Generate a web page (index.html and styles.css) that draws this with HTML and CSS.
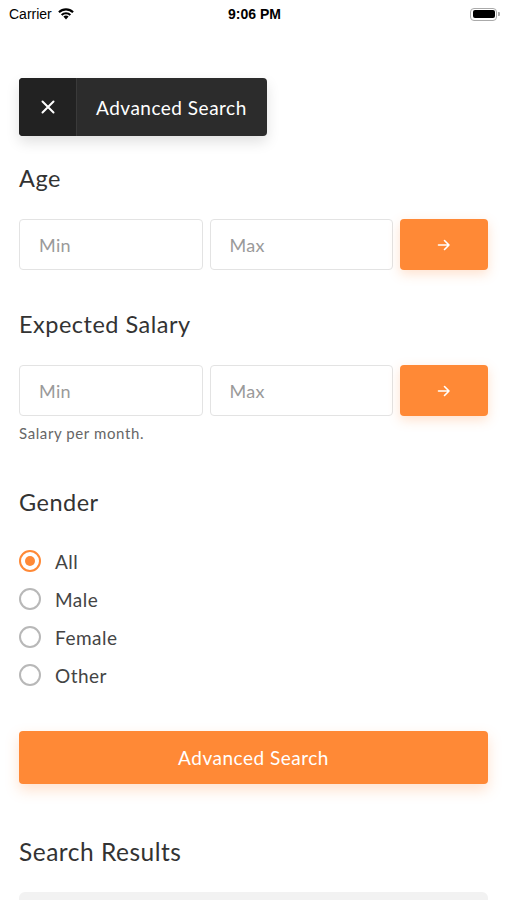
FILE: index.html
```html
<!DOCTYPE html>
<html lang="en">
<head>
<meta charset="utf-8">
<link rel="stylesheet" href="styles.css">
</head>
<body>
<div class="status">
  <div class="status-left">Carrier
    <svg class="wifi" width="18" height="13" viewBox="0 0 18 13"><path d="M9 12.5 L6.4 9.6 A3.8 3.8 0 0 1 11.6 9.6 Z" fill="#000"/><path d="M3.9 7.2 A7.4 7.4 0 0 1 14.1 7.2 L12.6 8.8 A5.2 5.2 0 0 0 5.4 8.8 Z" fill="#000"/><path d="M1.2 4.4 A11.2 11.2 0 0 1 16.8 4.4 L15.3 6 A9 9 0 0 0 2.7 6 Z" fill="#000"/></svg>
  </div>
  <div class="status-time">9:06 PM</div>
  <div class="status-right">
    <div class="battery"><div class="battery-fill"></div></div><div class="battery-cap"></div>
  </div>
</div>
<main class="page">
  <div class="toast">
    <div class="toast-close">
      <svg width="14" height="14" viewBox="0 0 14 14"><path d="M1.5 1.5 L12.5 12.5 M12.5 1.5 L1.5 12.5" stroke="#fff" stroke-width="2" stroke-linecap="round"/></svg>
    </div>
    <div class="toast-text">Advanced Search</div>
  </div>

  <h2 class="label label-age">Age</h2>
  <div class="range">
    <div class="field">Min</div>
    <div class="field">Max</div>
    <button class="go"><svg width="14" height="12" viewBox="0 0 14 12"><path d="M1.5 6 H12 M7.5 1.5 L12 6 L7.5 10.5" stroke="#fff" stroke-width="1.6" fill="none" stroke-linecap="round" stroke-linejoin="round"/></svg></button>
  </div>

  <h2 class="label label-salary">Expected Salary</h2>
  <div class="range">
    <div class="field">Min</div>
    <div class="field">Max</div>
    <button class="go"><svg width="14" height="12" viewBox="0 0 14 12"><path d="M1.5 6 H12 M7.5 1.5 L12 6 L7.5 10.5" stroke="#fff" stroke-width="1.6" fill="none" stroke-linecap="round" stroke-linejoin="round"/></svg></button>
  </div>
  <p class="help">Salary per month.</p>

  <h2 class="label label-gender">Gender</h2>
  <div class="radios">
    <div class="radio"><span class="dot on"></span>All</div>
    <div class="radio"><span class="dot"></span>Male</div>
    <div class="radio"><span class="dot"></span>Female</div>
    <div class="radio"><span class="dot"></span>Other</div>
  </div>

  <button class="submit">Advanced Search</button>

  <h2 class="label label-results">Search Results</h2>
  <div class="result-card"></div>
</main>
</body>
</html>
```
FILE: styles.css
```css
* { box-sizing: border-box; }
html, body { margin: 0; padding: 0; }
body {
  width: 507px;
  height: 900px;
  overflow: hidden;
  background: #fff;
  font-family: "Lato", "Noto Sans", sans-serif;
  color: #333;
}
.status {
  height: 28px;
  display: grid;
  grid-template-columns: 1fr auto 1fr;
  align-items: center;
  padding: 0 7px 0 9px;
  font-family: "Liberation Sans", Arial, sans-serif;
  font-size: 14px;
  color: #000;
}
.status-left { display: flex; align-items: center; gap: 5px; }
.wifi { margin-top: -2px; }
.status-time { font-weight: bold; text-align: center; }
.status-right { display: flex; justify-content: flex-end; align-items: center; }
.battery {
  width: 27px; height: 13px;
  border: 1px solid #aaa;
  border-radius: 4px;
  padding: 1.5px;
}
.battery-fill { width: 100%; height: 100%; background: #000; border-radius: 2px; }
.battery-cap { width: 2px; height: 4px; background: #aaa; border-radius: 0 1px 1px 0; margin-left: 1px; }

.page { padding: 0 19px; }
.toast {
  margin-top: 50px;
  width: 248px;
  height: 58px;
  display: flex;
  background: #2c2c2c;
  border-radius: 4px;
  overflow: hidden;
  box-shadow: 0 6px 14px rgba(0,0,0,0.12);
}
.toast-close {
  width: 58px;
  background: #222;
  border-right: 1px solid #3a3a3a;
  display: flex; align-items: center; justify-content: center;
}
.toast-text {
  flex: 1;
  display: flex; align-items: center;
  padding-left: 19px;
  color: #fff;
  font-size: 19px;
  letter-spacing: 0.5px;
}
.label {
  margin: 0;
  font-weight: normal;
  font-size: 23.5px;
  letter-spacing: 0.5px;
  line-height: 30px;
  color: #333;
}
.label-age { margin-top: 27px; }
.label-salary { margin-top: 39px; }
.label-gender { margin-top: 45px; }
.label-results { margin-top: 53px; font-size: 24.5px; }
.range {
  margin-top: 26px;
  display: grid;
  grid-template-columns: 1fr 1fr 88px;
  column-gap: 7px;
  height: 51px;
}
.field {
  border: 1px solid #e3e3e3;
  border-radius: 4px;
  display: flex; align-items: center;
  padding-left: 19px;
  font-size: 18px;
  letter-spacing: 0.3px;
  color: #9a9a9a;
}
.go {
  border: none;
  border-radius: 4px;
  background: #ff8936;
  display: flex; align-items: center; justify-content: center;
  box-shadow: 0 4px 12px rgba(255,137,54,0.25);
  padding: 0;
}
.help {
  margin: 8px 0 0;
  font-size: 15px;
  letter-spacing: 0.6px;
  line-height: 18px;
  color: #666;
}
.radios { margin-top: 25px; }
.radio {
  height: 38px;
  display: flex; align-items: center;
  font-size: 19px;
  letter-spacing: 0.5px;
  color: #444;
}
.dot {
  width: 22px; height: 22px;
  margin-left: 0;
  margin-right: 14px;
  border: 2px solid #b8b8b8;
  border-radius: 50%;
  display: flex; align-items: center; justify-content: center;
}
.dot.on { border-color: #ff8936; }
.dot.on::after {
  content: "";
  width: 10px; height: 10px;
  border-radius: 50%;
  background: #ff8936;
}
.submit {
  display: block;
  width: 100%;
  margin-top: 37px;
  height: 53px;
  border: none;
  border-radius: 4px;
  background: #ff8936;
  color: #fff;
  font-family: inherit;
  font-size: 19px;
  letter-spacing: 0.5px;
  box-shadow: 0 6px 14px rgba(255,137,54,0.25);
}
.result-card {
  margin-top: 25px;
  height: 8px;
  background: #f2f2f2;
  border-radius: 6px 6px 0 0;
}
```
